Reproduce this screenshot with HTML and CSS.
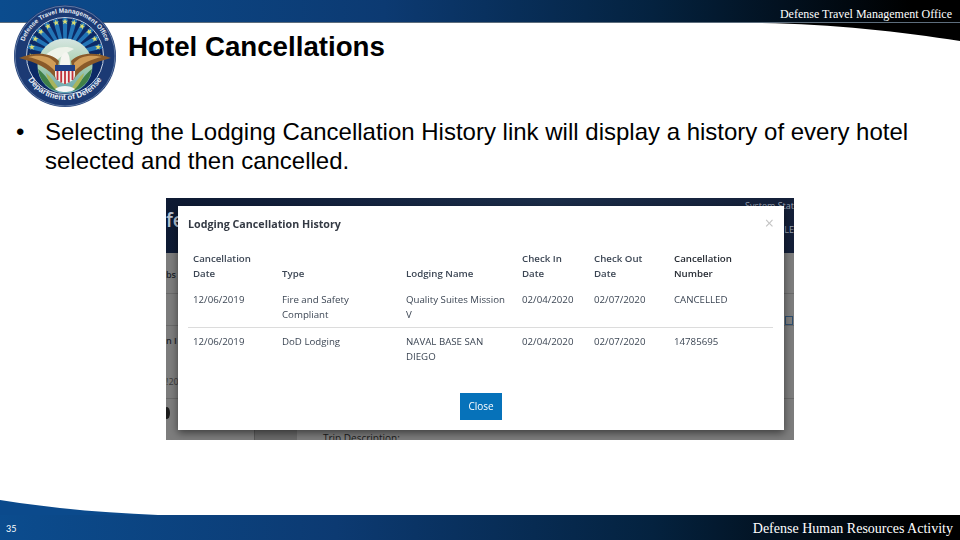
FILE: index.html
```html
<!DOCTYPE html>
<html>
<head>
    <title>Hotel Cancellations</title>
    <link rel="stylesheet" href="styles.css">
</head>
<body>
    <div class="slide">
        <div class="top-bar">
            <span class="office">Defense Travel Management Office</span>
        </div>
        <svg class="top-curve" viewBox="0 0 198 18" preserveAspectRatio="none">
            <path d="M0 0 C70 1 140 9 198 18 L198 0 Z" fill="#000"/>
        </svg>

        <svg class="seal" viewBox="0 0 102 102">
            <defs>
                <path id="ringTop" d="M9.5 62 A43 43 0 1 1 92.5 62"/>
                <path id="ringBottom" d="M8 58 A43.5 43.5 0 0 0 94 58"/>
                <polygon id="star" points="51,13.6 51.8,15.8 54,15.8 52.3,17.1 52.9,19.3 51,18 49.1,19.3 49.7,17.1 48,15.8 50.2,15.8"/>
                <polygon id="ray" points="49.8,51 52.2,51 53.4,13 48.6,13"/>
                <linearGradient id="globe" x1="0" y1="0" x2="0" y2="1">
                    <stop offset="0" stop-color="#d6e6e2"/>
                    <stop offset="0.5" stop-color="#a9cfae"/>
                    <stop offset="1" stop-color="#5f9fb4"/>
                </linearGradient>
            </defs>
            <circle cx="51" cy="51" r="51" fill="#1c3a74"/>
            <circle cx="51" cy="51" r="50" fill="none" stroke="#8fa5c4" stroke-width="0.6"/>
            <circle cx="51" cy="51" r="38.5" fill="#0c2a66" stroke="#c9d4e4" stroke-width="1"/>
            <g fill="#2274b6">
                <use href="#ray" transform="rotate(-75 51 51)"/>
                <use href="#ray" transform="rotate(-60 51 51)"/>
                <use href="#ray" transform="rotate(-45 51 51)"/>
                <use href="#ray" transform="rotate(-30 51 51)"/>
                <use href="#ray" transform="rotate(-15 51 51)"/>
                <use href="#ray"/>
                <use href="#ray" transform="rotate(15 51 51)"/>
                <use href="#ray" transform="rotate(30 51 51)"/>
                <use href="#ray" transform="rotate(45 51 51)"/>
                <use href="#ray" transform="rotate(60 51 51)"/>
                <use href="#ray" transform="rotate(75 51 51)"/>
            </g>
            <g fill="#dcdc6e">
                <use href="#star" transform="rotate(-90 51 51)"/>
                <use href="#star" transform="rotate(-75 51 51)"/>
                <use href="#star" transform="rotate(-60 51 51)"/>
                <use href="#star" transform="rotate(-45 51 51)"/>
                <use href="#star" transform="rotate(-30 51 51)"/>
                <use href="#star" transform="rotate(-15 51 51)"/>
                <use href="#star"/>
                <use href="#star" transform="rotate(15 51 51)"/>
                <use href="#star" transform="rotate(30 51 51)"/>
                <use href="#star" transform="rotate(45 51 51)"/>
                <use href="#star" transform="rotate(60 51 51)"/>
                <use href="#star" transform="rotate(75 51 51)"/>
                <use href="#star" transform="rotate(90 51 51)"/>
            </g>
            <circle cx="51" cy="61" r="27.5" fill="url(#globe)"/>
            <path d="M30 52 C38 42 52 40 60 44 C52 48 46 52 42 56 Z" fill="#eef3ea"/>
            <path d="M24 64 C30 68 36 78 44 86 C33 84 26 76 24 64 Z" fill="#3f8048"/>
            <path d="M78 64 C72 68 66 78 58 86 C69 84 76 76 78 64 Z" fill="#3f8048"/>
            <path d="M32 68 C37 72 41 78 45 84 L41 84 C37 80 33 74 32 68 Z" fill="#a8b45c"/>
            <path d="M70 68 C65 72 61 78 57 84 L61 84 C65 80 69 74 70 68 Z" fill="#a8b45c"/>
            <path d="M5 53 C20 47 36 47 45 56 L42 74 C36 64 22 57 5 53 Z" fill="#8a5a2a"/>
            <path d="M97 53 C82 47 66 47 57 56 L60 74 C66 64 80 57 97 53 Z" fill="#8a5a2a"/>
            <path d="M14 52 C26 49 36 51 42 58 L41 66 C34 58 24 54 14 52 Z" fill="#cf9c58"/>
            <path d="M88 52 C76 49 66 51 60 58 L61 66 C68 58 78 54 88 52 Z" fill="#cf9c58"/>
            <path d="M46 60 C46 53 48 48 52 47 C55 48 56 53 56 60 Z" fill="#f5f5f0"/>
            <path d="M41 60 H61 V70 C61 75 56 77 51 79 C46 77 41 75 41 70 Z" fill="#f4f1ee"/>
            <rect x="41" y="60" width="20" height="6" fill="#1f3f86"/>
            <path d="M43.5 66 V75 M47.2 66 V77.5 M51 66 V79 M54.8 66 V77.5 M58.5 66 V75" stroke="#c0313a" stroke-width="1.8"/>
            <path d="M41 84 C46 80 56 80 61 84 C58 88 44 88 41 84 Z" fill="#f2f4f4"/>
            <text class="seal-text"><textPath href="#ringTop" startOffset="50%">Defense Travel Management Office</textPath></text>
            <text class="seal-text seal-text-low"><textPath href="#ringBottom" startOffset="50%">Department of Defense</textPath></text>
        </svg>

        <div class="content">
            <h1>Hotel Cancellations</h1>
            <ul class="bullets">
                <li>Selecting the Lodging Cancellation History link will display a history of every hotel selected and then cancelled.</li>
            </ul>

            <div class="shot">
                <div class="shot-head">
                    <span class="shot-brand">fe</span>
                    <span class="shot-status">System Stat</span>
                    <span class="shot-le">LE</span>
                </div>
                <div class="shot-page">
                    <span class="shot-bit bit-tabs">bs</span>
                    <span class="shot-bit bit-info">n I</span>
                    <span class="shot-bit bit-num">!20</span>
                    <span class="shot-dot"></span>
                    <span class="shot-line line-a"></span>
                    <span class="shot-line line-b"></span>
                    <span class="shot-line line-c"></span>
                    <span class="shot-lower"></span>
                    <span class="shot-mail"></span>
                    <span class="shot-trip">Trip Description:</span>
                </div>

                <div class="modal">
                    <div class="modal-head">
                        <h2>Lodging Cancellation History</h2>
                        <span class="modal-x">&times;</span>
                    </div>
                    <table class="history">
                        <thead>
                            <tr>
                                <th class="col-date">Cancellation Date</th>
                                <th class="col-type">Type</th>
                                <th class="col-name">Lodging Name</th>
                                <th class="col-in">Check In Date</th>
                                <th class="col-out">Check Out Date</th>
                                <th class="col-num">Cancellation Number</th>
                            </tr>
                        </thead>
                        <tbody>
                            <tr class="row-line">
                                <td>12/06/2019</td>
                                <td>Fire and Safety Compliant</td>
                                <td>Quality Suites Mission V</td>
                                <td>02/04/2020</td>
                                <td>02/07/2020</td>
                                <td>CANCELLED</td>
                            </tr>
                            <tr>
                                <td>12/06/2019</td>
                                <td>DoD Lodging</td>
                                <td>NAVAL BASE SAN DIEGO</td>
                                <td>02/04/2020</td>
                                <td>02/07/2020</td>
                                <td>14785695</td>
                            </tr>
                        </tbody>
                    </table>
                    <div class="modal-foot">
                        <a class="close-button">Close</a>
                    </div>
                </div>
            </div>
        </div>

        <svg class="bottom-curve" viewBox="0 0 158 15" preserveAspectRatio="none">
            <path d="M0 0 C50 8 105 13 158 15 L0 15 Z" fill="#0b4a8c"/>
        </svg>
        <div class="bottom-bar">
            <span class="page-no">35</span>
            <span class="agency">Defense Human Resources Activity</span>
        </div>
    </div>
</body>
</html>
```

FILE: styles.css
```css
body {
    margin: 0;
    padding: 0;
    background-color: #ffffff;
    font-family: "Liberation Sans", Arial, sans-serif;
}

.slide {
    position: relative;
    width: 960px;
    height: 540px;
    overflow: hidden;
    display: flex;
    flex-direction: column;
}

.top-bar {
    height: 23px;
    flex-shrink: 0;
    display: flex;
    justify-content: flex-end;
    padding-right: 8px;
    background: linear-gradient(to right, #0b4c8e 0%, #0c3a72 40%, #04223f 68%, #000000 95%);
    border-bottom: 1px solid #5d6d7c;
    box-sizing: border-box;
}

.office {
    font-family: "Liberation Serif", serif;
    font-size: 12px;
    line-height: 28px;
    color: #ffffff;
}

.top-curve {
    position: absolute;
    top: 23px;
    left: 762px;
    width: 198px;
    height: 18px;
}

.seal {
    position: absolute;
    top: 5px;
    left: 14px;
    width: 102px;
    height: 102px;
}

.seal-text {
    font-family: "Liberation Sans", sans-serif;
    font-size: 6.4px;
    font-weight: bold;
    fill: #e8eef6;
    text-anchor: middle;
}

.seal-text-low {
    font-size: 8px;
}

.content {
    flex: 1;
    display: flex;
    flex-direction: column;
}

h1 {
    margin: 8px 0 0 128px;
    font-size: 27.7px;
    line-height: 32px;
    font-weight: bold;
    color: #000000;
}

.bullets {
    margin: 54px 40px 0 45px;
    padding: 0;
    list-style: none;
    font-size: 24px;
    line-height: 29px;
    color: #000000;
}

.bullets li {
    position: relative;
}

.bullets li::before {
    content: "\2022";
    position: absolute;
    left: -29px;
}

.shot {
    position: relative;
    width: 628px;
    height: 242px;
    margin: 23px 0 0 166px;
    background-color: #7d7d7d;
    overflow: hidden;
}

.shot-head {
    position: relative;
    height: 55px;
    background: linear-gradient(100deg, #0e1a33 0%, #14233f 30%, #1b2d49 60%, #141f38 100%);
}

.shot-brand {
    position: absolute;
    left: 0;
    top: 9px;
    font-family: "Open Sans", sans-serif;
    font-size: 19px;
    font-weight: 600;
    color: #b9c3d2;
}

.shot-status {
    position: absolute;
    right: 0;
    top: 1px;
    font-family: "Open Sans", sans-serif;
    font-size: 9px;
    color: #9aa3b2;
}

.shot-le {
    position: absolute;
    right: 0;
    top: 25px;
    font-family: "Open Sans", sans-serif;
    font-size: 9px;
    color: #9aa3b2;
}

.shot-page {
    position: relative;
    height: 187px;
    background-color: #7d7d7d;
}

.shot-bit {
    position: absolute;
    left: 0;
    font-family: "Open Sans", sans-serif;
    font-size: 9px;
    font-weight: 600;
    color: #20242b;
}

.bit-tabs { top: 15px; }
.bit-info { top: 81px; }
.bit-num { top: 122px; font-weight: 400; color: #3a3a3a; }

.shot-dot {
    position: absolute;
    left: -2px;
    top: 154px;
    width: 6px;
    height: 12px;
    background-color: #1c1c1c;
    border-radius: 50%;
}

.shot-line {
    position: absolute;
    height: 1px;
    left: 0;
    right: 0;
    background-color: #6a6a6a;
}

.line-a { top: 40px; }
.line-b { top: 72px; }
.line-c { top: 145px; }

.shot-lower {
    position: absolute;
    left: 88px;
    bottom: 0;
    width: 42px;
    height: 12px;
    background-color: #6a6a6a;
    border-left: 1px solid #5a5a5a;
}

.shot-mail {
    position: absolute;
    right: 1px;
    top: 63px;
    width: 6px;
    height: 7px;
    border: 1px solid #2f4f6f;
}

.shot-trip {
    position: absolute;
    left: 157px;
    top: 178px;
    font-family: "Open Sans", sans-serif;
    font-size: 10px;
    color: #1b1b1b;
}

.modal {
    position: absolute;
    left: 12px;
    top: 8px;
    width: 606px;
    height: 224px;
    box-sizing: border-box;
    padding: 0 10px;
    background-color: #ffffff;
    box-shadow: 0 3px 8px rgba(0, 0, 0, 0.5);
    font-family: "Open Sans", sans-serif;
    color: #3c4654;
    filter: blur(0.4px);
}

.modal-head {
    display: flex;
    justify-content: space-between;
    height: 45px;
}

.modal-head h2 {
    margin: 11px 0 0 0;
    font-size: 10.7px;
    line-height: 15px;
    font-weight: 700;
    color: #343a44;
}

.modal-x {
    margin: 6px 0 0 0;
    font-size: 16px;
    line-height: 22px;
    color: #c4c4c4;
}

.history {
    width: 585px;
    border-collapse: collapse;
    table-layout: fixed;
    font-size: 9.7px;
    line-height: 15px;
}

.history th {
    padding: 0 5px 11px 5px;
    text-align: left;
    vertical-align: bottom;
    font-weight: 600;
}

.history td {
    padding: 0 5px 5px 5px;
    vertical-align: top;
}

.col-date { width: 79px; }
.col-type { width: 114px; }
.col-name { width: 106px; }
.col-in { width: 62px; }
.col-out { width: 70px; }

.history .col-num {
    color: #262b33;
}

.row-line td {
    border-bottom: 1px solid #dcdcdc;
}

.history tr:last-child td {
    padding-top: 6px;
}

.modal-foot {
    display: flex;
    justify-content: center;
    margin-top: 24px;
}

.close-button {
    display: block;
    width: 42px;
    height: 27px;
    line-height: 27px;
    text-align: center;
    background-color: #0672ba;
    color: #ffffff;
    font-size: 10px;
}

.bottom-curve {
    position: absolute;
    left: 0;
    top: 500px;
    width: 158px;
    height: 15px;
}

.bottom-bar {
    height: 25px;
    flex-shrink: 0;
    display: flex;
    justify-content: space-between;
    padding: 0 7px 0 6px;
    background: linear-gradient(to right, #0b4c8e 0%, #0c3a72 35%, #04223f 68%, #000000 95%);
}

.page-no {
    font-family: "Lato", sans-serif;
    font-size: 9px;
    line-height: 28px;
    color: #ffffff;
}

.agency {
    font-family: "Liberation Serif", serif;
    font-size: 14px;
    line-height: 27px;
    color: #ffffff;
}
```
